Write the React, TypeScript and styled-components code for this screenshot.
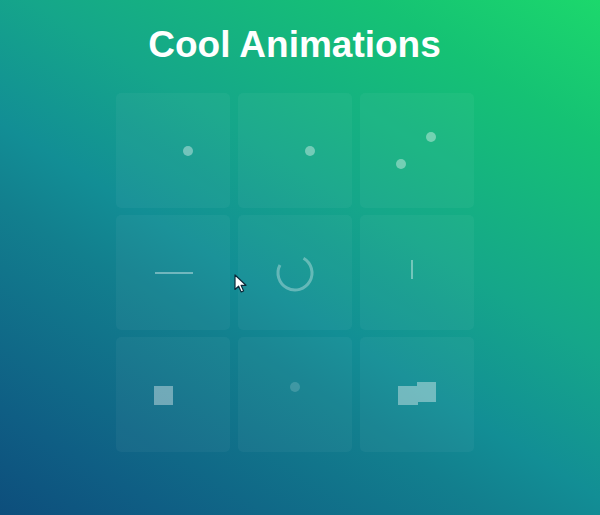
import React from "react";
import styled, { createGlobalStyle } from "styled-components";

const Global = createGlobalStyle`
  html, body { margin: 0; padding: 0; }
  body {
    width: 600px;
    height: 515px;
    overflow: hidden;
    font-family: "Liberation Sans", Arial, sans-serif;
    background: linear-gradient(
      32deg,
      #0d4e7c 0%,
      #0f5e84 12%,
      #127f8e 35%,
      #128e95 44%,
      #15a68a 60%,
      #15c274 84%,
      #1cd86c 100%
    );
  }
`;

const Page = styled.main`
  position: relative;
  height: 515px;
  box-sizing: border-box;
  padding: 24px 11px 0 0;
  display: flex;
  flex-direction: column;
  align-items: center;
`;

const Title = styled.h1`
  margin: 0 0 27px;
  font-size: 37px;
  font-weight: 700;
  color: #ffffff;
  line-height: 42px;
`;

const Grid = styled.div`
  display: grid;
  grid-template-columns: repeat(3, 114px);
  grid-auto-rows: 115px;
  column-gap: 8px;
  row-gap: 7px;
`;

const Cell = styled.div`
  position: relative;
  border-radius: 5px;
  background: rgba(255, 255, 255, 0.04);
  display: flex;
  align-items: center;
  justify-content: center;
`;

const Stack = styled.div<{ $a?: number }>`
  display: grid;
  place-items: center;
  opacity: ${(p) => p.$a ?? 1};
  & > * { grid-area: 1 / 1; }
`;

const Dot = styled.div<{ $x: number; $y: number; $a?: number; $s?: number }>`
  width: ${(p) => p.$s ?? 10}px;
  height: ${(p) => p.$s ?? 10}px;
  border-radius: 50%;
  background: rgba(255, 255, 255, ${(p) => p.$a ?? 0.38});
  transform: translate(${(p) => p.$x}px, ${(p) => p.$y}px);
`;

const Bar = styled.div<{ $w: number; $h: number; $x: number; $y: number }>`
  width: ${(p) => p.$w}px;
  height: ${(p) => p.$h}px;
  background: rgba(255, 255, 255, 0.38);
  transform: translate(${(p) => p.$x}px, ${(p) => p.$y}px);
`;

const Square = styled.div<{ $w: number; $h: number; $x: number; $y: number; $solid?: boolean }>`
  width: ${(p) => p.$w}px;
  height: ${(p) => p.$h}px;
  background: ${(p) => (p.$solid ? "#ffffff" : "rgba(255, 255, 255, 0.38)")};
  transform: translate(${(p) => p.$x}px, ${(p) => p.$y}px);
`;

const SpinnerSvg = styled.svg`
  width: 40px;
  height: 40px;
`;

const Cursor = styled.svg`
  position: absolute;
  left: 234px;
  top: 274px;
  width: 14px;
  height: 20px;
`;

function Spinner() {
  const r = 17;
  const cx = 20;
  const cy = 20;
  const a1 = (-60 * Math.PI) / 180;
  const a2 = (-152 * Math.PI) / 180;
  const x1 = cx + r * Math.cos(a1);
  const y1 = cy + r * Math.sin(a1);
  const x2 = cx + r * Math.cos(a2);
  const y2 = cy + r * Math.sin(a2);
  return (
    <SpinnerSvg viewBox="0 0 40 40">
      <path
        d={`M ${x1} ${y1} A ${r} ${r} 0 1 1 ${x2} ${y2}`}
        fill="none"
        stroke="rgba(255,255,255,0.32)"
        strokeWidth="3"
      />
    </SpinnerSvg>
  );
}

export default function App() {
  return (
    <>
      <Global />
      <Page>
        <Title>Cool Animations</Title>
        <Grid>
          <Cell>
            <Dot $x={15} $y={0} />
          </Cell>
          <Cell>
            <Dot $x={15} $y={0} />
          </Cell>
          <Cell>
            <Stack>
              <Dot $x={14} $y={-14} />
              <Dot $x={-16} $y={13} />
            </Stack>
          </Cell>
          <Cell>
            <Bar $w={38} $h={2} $x={1} $y={0} />
          </Cell>
          <Cell>
            <Spinner />
          </Cell>
          <Cell>
            <Bar $w={2} $h={19} $x={-5} $y={-3} />
          </Cell>
          <Cell>
            <Square $w={19} $h={19} $x={-9} $y={1} />
          </Cell>
          <Cell>
            <Dot $x={0} $y={-8} $a={0.16} $s={10} />
          </Cell>
          <Cell>
            <Stack $a={0.38}>
              <Square $solid $w={20} $h={19} $x={-9} $y={1} />
              <Square $solid $w={19} $h={20} $x={10} $y={-3} />
            </Stack>
          </Cell>
        </Grid>
        <Cursor viewBox="0 0 14 20">
          <path
            d="M1 1 L1 15.5 L4.6 12.2 L7.2 18 L9.6 17 L7.1 11.3 L12 11.3 Z"
            fill="#ffffff"
            stroke="#0b2a3a"
            strokeWidth="1.2"
            strokeLinejoin="round"
          />
        </Cursor>
      </Page>
    </>
  );
}
